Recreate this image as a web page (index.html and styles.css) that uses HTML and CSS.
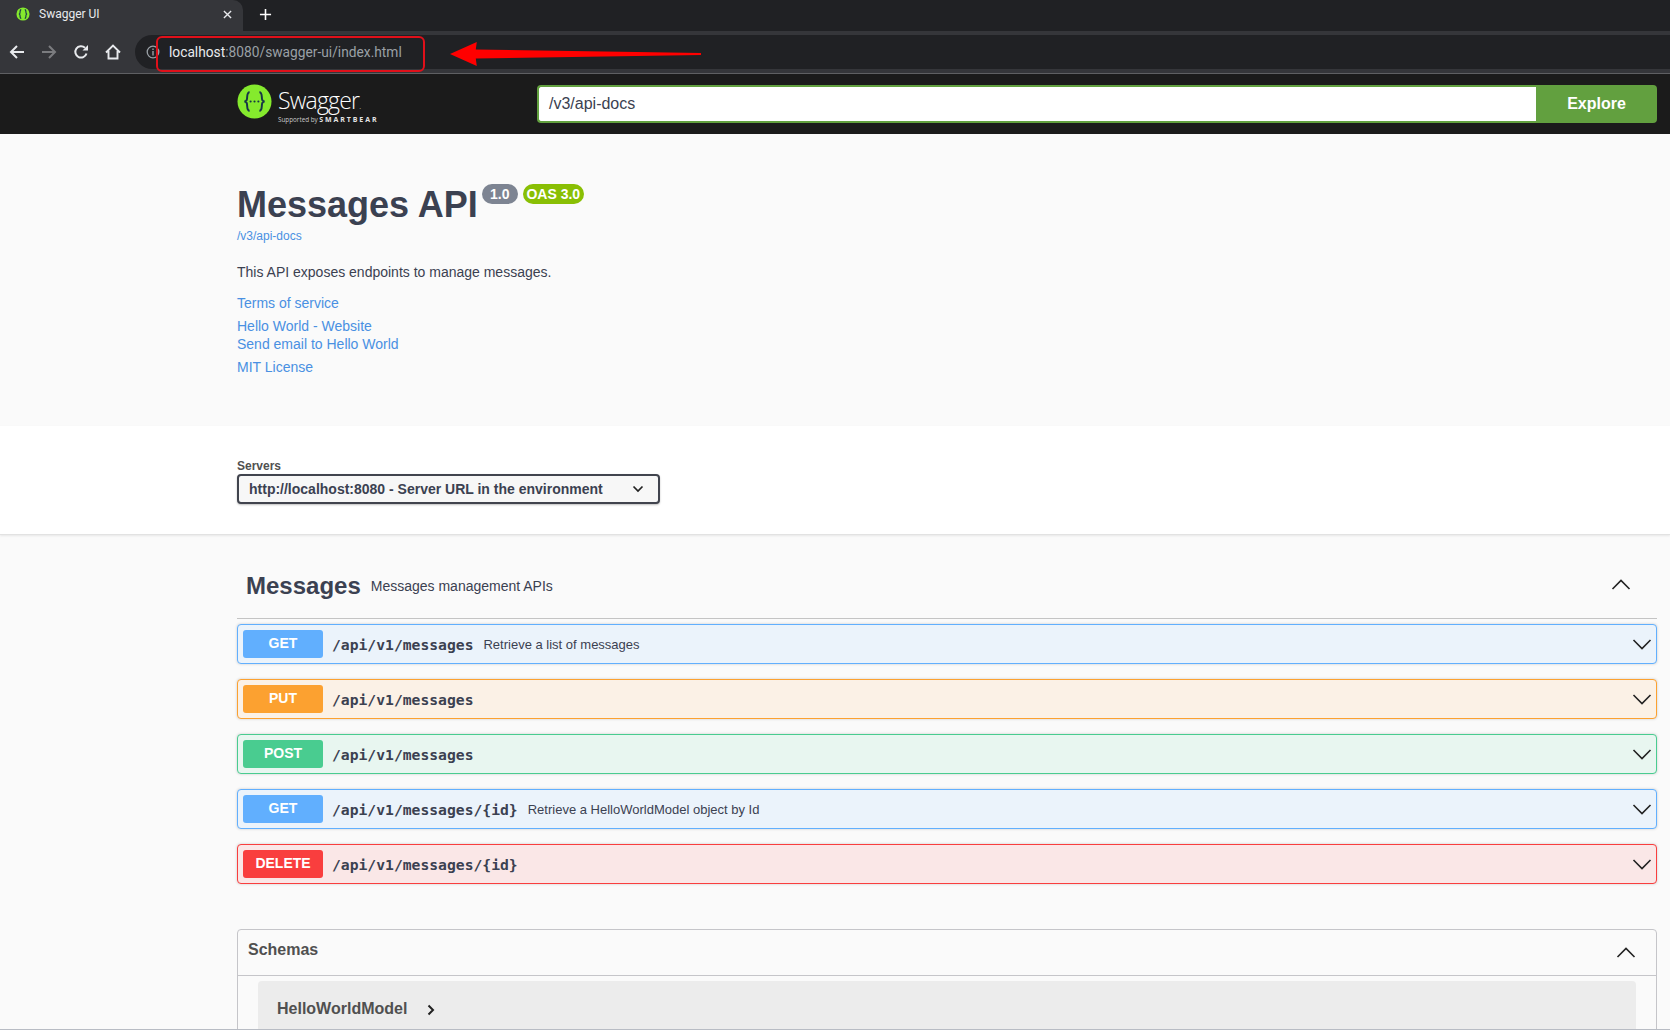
FILE: index.html
```html
<!DOCTYPE html>
<html lang="en">
<head>
    <meta charset="UTF-8">
    <title>Swagger UI</title>
    <link rel="stylesheet" href="styles.css">
</head>
<body>
    <!-- Browser chrome -->
    <div class="tabstrip">
        <div class="tab">
            <svg class="tab-icon" viewBox="0 0 16 16">
                <circle cx="8" cy="8" r="7.500" fill="#85ea2d"/>
                <path d="M6 3C4 3 5 6.500 4.400 7.300 4.200 7.700 3.800 8 3.200 8 3.800 8 4.200 8.300 4.400 8.700 5 9.500 4 13 6 13M10 3C12 3 11 6.500 11.600 7.300 11.800 7.700 12.200 8 12.800 8 12.200 8 11.800 8.300 11.600 8.700 11 9.500 12 13 10 13" fill="none" stroke="#173647" stroke-width="1.300"/>
            </svg>
            <span class="tab-title">Swagger UI</span>
            <svg class="tab-close" viewBox="0 0 10 10"><path d="M1 1L9 9M9 1L1 9" stroke="#e8eaed" stroke-width="1.500"/></svg>
        </div>
        <svg class="new-tab" viewBox="0 0 14 14"><path d="M7 1V13M1 7H13" stroke="#fff" stroke-width="1.700"/></svg>
    </div>
    <div class="toolbar">
        <svg class="nav-icon" viewBox="0 0 16 16"><path d="M15 8H2M8 2L2 8L8 14" fill="none" stroke="#e8eaed" stroke-width="2"/></svg>
        <svg class="nav-icon" viewBox="0 0 16 16"><path d="M1 8H14M8 2L14 8L8 14" fill="none" stroke="#7b7c7f" stroke-width="2"/></svg>
        <svg class="nav-icon" viewBox="0 0 16 16"><path d="M13.500 9.500A5.700 5.700 0 1 1 12 3.800" fill="none" stroke="#e8eaed" stroke-width="2"/><path d="M9.500 6.500H15V1Z" fill="#e8eaed"/></svg>
        <svg class="nav-icon" viewBox="0 0 16 16"><path d="M1 8.500L8 1.500L15 8.500M3.500 7V14.500H12.500V7" fill="none" stroke="#e8eaed" stroke-width="1.900"/></svg>
        <div class="omnibox">
            <svg class="info-icon" viewBox="0 0 14 14"><circle cx="7" cy="7" r="5.800" fill="none" stroke="#9aa0a6" stroke-width="1.300"/><path d="M7 6V10.500M7 3.400V5" stroke="#9aa0a6" stroke-width="1.400"/></svg>
            <span class="url"><span class="url-host">localhost</span>:8080/swagger-ui/index.html</span>
        </div>
        <div class="url-mark"></div>
        <svg class="url-arrow" viewBox="0 0 254 30"><path d="M0 15L27 3L26 10.500L253 14L253 16L26 19.500L27 27Z" fill="#f00"/></svg>
    </div>

    <!-- Swagger top bar -->
    <header class="topbar">
        <div class="topbar-inner">
            <div class="logo">
                <svg class="logo-mark" viewBox="0 0 36 36">
                    <circle cx="18" cy="18" r="17.500" fill="#85ea2d"/>
                    <path d="M13 8.500C9.500 8.500 11 14.500 10 16.500 9.500 17.500 8.500 18 7.500 18 8.500 18 9.500 18.500 10 19.500 11 21.500 9.500 27.500 13 27.500M23 8.500C26.500 8.500 25 14.500 26 16.500 26.500 17.500 27.500 18 28.500 18 27.500 18 26.500 18.500 26 19.500 25 21.500 26.500 27.500 23 27.500" fill="none" stroke="#173647" stroke-width="2"/>
                    <circle cx="14" cy="18" r="1.100" fill="#173647"/>
                    <circle cx="18" cy="18" r="1.100" fill="#173647"/>
                    <circle cx="22" cy="18" r="1.100" fill="#173647"/>
                </svg>
                <div class="logo-text">
                    <div class="logo-name">Swagger<span class="logo-dot">.</span></div>
                    <div class="logo-sub">Supported by <span class="logo-bear">SMARTBEAR</span></div>
                </div>
            </div>
            <form class="explore">
                <div class="explore-input">/v3/api-docs</div>
                <div class="explore-btn">Explore</div>
            </form>
        </div>
    </header>

    <!-- API info -->
    <section class="info">
        <div class="wrap">
            <div class="title-row">
                <h1>Messages API</h1>
                <span class="badge badge-version">1.0</span>
                <span class="badge badge-oas">OAS 3.0</span>
            </div>
            <a class="spec-link">/v3/api-docs</a>
            <p class="description">This API exposes endpoints to manage messages.</p>
            <a class="info-link link-terms">Terms of service</a>
            <a class="info-link link-site">Hello World - Website</a>
            <a class="info-link">Send email to Hello World</a>
            <a class="info-link link-license">MIT License</a>
        </div>
    </section>

    <!-- Servers -->
    <section class="servers">
        <div class="wrap">
            <div class="servers-label">Servers</div>
            <div class="server-select">
                <span>http://localhost:8080 - Server URL in the environment</span>
                <svg class="select-arrow" viewBox="0 0 12 8"><path d="M1.500 1.500L6 6L10.500 1.500" fill="none" stroke="#222" stroke-width="1.700"/></svg>
            </div>
        </div>
    </section>

    <!-- Operations -->
    <main class="operations">
        <div class="wrap">
            <div class="tag">
                <h3>Messages</h3>
                <span class="tag-desc">Messages management APIs</span>
                <svg class="arrow arrow-tag" viewBox="0 0 20 20"><path d="M1.500 14L10 5.500L18.500 14" fill="none" stroke="#222" stroke-width="1.600"/></svg>
            </div>

            <div class="opblock opblock-get">
                <span class="method">GET</span>
                <span class="path">/api/v1/messages</span>
                <span class="summary">Retrieve a list of messages</span>
                <svg class="arrow" viewBox="0 0 20 20"><path d="M1.500 6L10 14.500L18.500 6" fill="none" stroke="#222" stroke-width="1.600"/></svg>
            </div>
            <div class="opblock opblock-put">
                <span class="method">PUT</span>
                <span class="path">/api/v1/messages</span>
                <svg class="arrow" viewBox="0 0 20 20"><path d="M1.500 6L10 14.500L18.500 6" fill="none" stroke="#222" stroke-width="1.600"/></svg>
            </div>
            <div class="opblock opblock-post">
                <span class="method">POST</span>
                <span class="path">/api/v1/messages</span>
                <svg class="arrow" viewBox="0 0 20 20"><path d="M1.500 6L10 14.500L18.500 6" fill="none" stroke="#222" stroke-width="1.600"/></svg>
            </div>
            <div class="opblock opblock-get">
                <span class="method">GET</span>
                <span class="path">/api/v1/messages/{id}</span>
                <span class="summary">Retrieve a HelloWorldModel object by Id</span>
                <svg class="arrow" viewBox="0 0 20 20"><path d="M1.500 6L10 14.500L18.500 6" fill="none" stroke="#222" stroke-width="1.600"/></svg>
            </div>
            <div class="opblock opblock-delete">
                <span class="method">DELETE</span>
                <span class="path">/api/v1/messages/{id}</span>
                <svg class="arrow" viewBox="0 0 20 20"><path d="M1.500 6L10 14.500L18.500 6" fill="none" stroke="#222" stroke-width="1.600"/></svg>
            </div>

            <div class="schemas">
                <div class="schemas-head">
                    <h4>Schemas</h4>
                    <svg class="arrow" viewBox="0 0 20 20"><path d="M1.500 14L10 5.500L18.500 14" fill="none" stroke="#222" stroke-width="1.600"/></svg>
                </div>
                <div class="model-box">
                    <span class="model-name">HelloWorldModel</span>
                    <svg class="model-arrow" viewBox="0 0 8 12"><path d="M1.500 1.500L6 6L1.500 10.500" fill="none" stroke="#222" stroke-width="2"/></svg>
                </div>
            </div>
        </div>
    </main>
    <div class="bottom-line"></div>
</body>
</html>
```
FILE: styles.css
```css
html, body {
    margin: 0;
    height: 1030px;
    overflow: hidden;
}

body {
    font-family: "Liberation Sans", Arial, sans-serif;
    background: #fafafa;
    color: #3b4151;
    position: relative;
}

/* Browser chrome */
.tabstrip {
    height: 31px;
    background: #202124;
    display: flex;
    align-items: center;
}

.tab {
    width: 243px;
    height: 31px;
    box-sizing: border-box;
    background: #35363a;
    border-radius: 0 10px 0 0;
    display: flex;
    align-items: center;
    padding: 0 11px 3px 16px;
}

.tab-icon {
    width: 14px;
    height: 14px;
    margin-right: 9px;
}

.tab-title {
    flex: 1;
    font-family: "Roboto", sans-serif;
    font-size: 12px;
    color: #e8eaed;
}

.tab-close {
    width: 9px;
    height: 9px;
}

.new-tab {
    width: 13px;
    height: 13px;
    margin-left: 16px;
    margin-bottom: 3px;
}

.toolbar {
    height: 42px;
    background: #35363a;
    border-bottom: 1px solid #5f6063;
    display: flex;
    align-items: center;
    padding-left: 9px;
    position: relative;
}

.nav-icon {
    width: 16px;
    height: 16px;
    margin-right: 16px;
}

.omnibox {
    flex: 1;
    height: 34px;
    margin-left: -2px;
    background: #202124;
    border-radius: 17px 0 0 17px;
    display: flex;
    align-items: center;
    padding-left: 11px;
}

.info-icon {
    width: 14px;
    height: 14px;
    margin-right: 9px;
}

.url {
    font-family: "Roboto", sans-serif;
    font-size: 13.750px;
    color: #9aa0a6;
}

.url-host {
    color: #e8eaed;
}

.url-mark {
    position: absolute;
    left: 156px;
    top: 5px;
    width: 265px;
    height: 32px;
    border: 2px solid #e0101a;
    border-radius: 6px;
}

.url-arrow {
    position: absolute;
    left: 450px;
    top: 8px;
    width: 252px;
    height: 30px;
}

/* Top bar */
.topbar {
    height: 60px;
    background: #1b1b1b;
}

.topbar-inner {
    margin-left: 237px;
    width: 1420px;
    height: 60px;
    display: flex;
    align-items: center;
}

.logo {
    width: 300px;
    display: flex;
    align-items: center;
    padding-bottom: 2px;
}

.logo-mark {
    width: 35px;
    height: 35px;
    margin-right: 6px;
    margin-bottom: 4px;
}

.logo-name {
    font-family: "Open Sans", sans-serif;
    font-weight: 300;
    font-size: 23px;
    line-height: 21px;
    margin-top: 8px;
    letter-spacing: -0.800px;
    color: #fff;
}

.logo-dot {
    font-size: 8px;
}

.logo-sub {
    font-family: "Open Sans", sans-serif;
    font-size: 6.300px;
    line-height: 8px;
    color: #c9c9c9;
}

.logo-bear {
    font-weight: 700;
    font-size: 7px;
    letter-spacing: 1.900px;
    color: #e4e4e4;
}

.explore {
    flex: 1;
    height: 38px;
    display: flex;
}

.explore-input {
    flex: 1;
    box-sizing: border-box;
    background: #fff;
    border: 2px solid #62a03f;
    border-right: none;
    border-radius: 4px 0 0 4px;
    padding-left: 10px;
    font-size: 16px;
    line-height: 34px;
    color: #3b4151;
}

.explore-btn {
    width: 121px;
    background: #62a03f;
    border-radius: 0 4px 4px 0;
    color: #fff;
    font-size: 16px;
    font-weight: bold;
    line-height: 37px;
    text-align: center;
}

/* Shared column */
.wrap {
    margin-left: 237px;
    width: 1420px;
}

a {
    color: #4990e2;
    display: block;
}

/* API info */
.info {
    height: 292px;
    box-sizing: border-box;
    padding-top: 50px;
    background: #fafafa;
}

.title-row {
    display: flex;
    align-items: flex-start;
    height: 44px;
}

h1 {
    margin: 0;
    font-size: 36px;
    line-height: 42px;
    font-weight: bold;
    color: #3b4151;
}

.badge {
    height: 20px;
    line-height: 20px;
    border-radius: 10px;
    color: #fff;
    font-size: 14px;
    font-weight: bold;
    text-align: center;
}

.badge-version {
    width: 36px;
    margin-left: 4px;
    background: #7d8492;
}

.badge-oas {
    width: 61px;
    margin-left: 5px;
    background: #89bf04;
}

.spec-link {
    font-size: 12px;
    line-height: 16px;
}

.description {
    margin: 18px 0 0;
    font-size: 14px;
    line-height: 20px;
}

.info-link {
    font-size: 14px;
    line-height: 18px;
}

.link-terms {
    margin-top: 12px;
}

.link-site {
    margin-top: 5px;
}

.link-license {
    margin-top: 5px;
}

/* Servers */
.servers {
    height: 109px;
    box-sizing: border-box;
    padding-top: 33px;
    background: #fff;
    border-bottom: 1px solid #e2e2e2;
    box-shadow: 0 1px 2px rgba(0, 0, 0, 0.08);
}

.servers-label {
    font-size: 12px;
    font-weight: bold;
    line-height: 14px;
    color: #505050;
}

.server-select {
    width: 423px;
    height: 30px;
    margin-top: 1px;
    box-sizing: border-box;
    border: 2px solid #41444e;
    border-radius: 4px;
    background: #f7f7f7;
    box-shadow: 0 1px 2px rgba(0, 0, 0, 0.25);
    display: flex;
    align-items: center;
    justify-content: space-between;
    padding: 0 14px 0 10px;
    font-size: 14px;
    font-weight: bold;
}

.select-arrow {
    width: 12px;
    height: 8px;
}

/* Operations */
.operations {
    height: 495px;
    box-sizing: border-box;
    overflow: hidden;
    padding-top: 19px;
}

.tag {
    height: 64px;
    border-bottom: 1px solid #c4c4c4;
    display: flex;
    align-items: center;
    padding-left: 9px;
}

h3 {
    margin: 0 10px 0 0;
    font-size: 24px;
    font-weight: bold;
}

.tag-desc {
    flex: 1;
    font-size: 14px;
}

.arrow {
    width: 20px;
    height: 20px;
}

.arrow-tag {
    margin-right: 26px;
    margin-bottom: 2px;
}

.opblock {
    height: 40px;
    box-sizing: border-box;
    margin-top: 15px;
    border: 1px solid;
    border-radius: 4px;
    display: flex;
    align-items: center;
    padding: 0 4px 0 5px;
    box-shadow: 0 0 3px rgba(0, 0, 0, 0.19);
}

.tag + .opblock {
    margin-top: 5px;
}

.opblock .arrow {
    margin-left: auto;
}

.method {
    width: 80px;
    height: 28px;
    flex-shrink: 0;
    border-radius: 3px;
    color: #fff;
    font-size: 14px;
    font-weight: bold;
    line-height: 27px;
    text-align: center;
    margin-right: 9px;
}

.path {
    font-family: "DejaVu Sans Mono", monospace;
    font-size: 14.700px;
    font-weight: bold;
    color: #3b4151;
    padding-top: 1px;
}

.summary {
    margin-left: 10px;
    font-size: 13px;
    color: #3b4151;
}

.opblock-get {
    background: #ebf3fb;
    border-color: #61affe;
}

.opblock-get .method {
    background: #61affe;
}

.opblock-put {
    background: #fbf1e6;
    border-color: #fca130;
}

.opblock-put .method {
    background: #fca130;
}

.opblock-post {
    background: #e8f6f0;
    border-color: #49cc90;
}

.opblock-post .method {
    background: #49cc90;
}

.opblock-delete {
    background: #fae7e7;
    border-color: #f93e3e;
}

.opblock-delete .method {
    background: #f93e3e;
}

/* Schemas */
.schemas {
    margin-top: 45px;
    border: 1px solid #c5c5c9;
    border-radius: 4px;
    height: 200px;
}

.schemas-head {
    height: 46px;
    box-sizing: border-box;
    border-bottom: 1px solid #c5c5c9;
    display: flex;
    align-items: center;
    justify-content: space-between;
    padding: 0 20px 5px 10px;
}

.schemas-head .arrow {
    margin-top: 5px;
}

h4 {
    margin: 0;
    font-size: 16px;
    font-weight: bold;
    color: #505050;
}

.model-box {
    margin: 5px 20px 0;
    height: 80px;
    background: #ececec;
    border-radius: 4px;
    padding: 19px 0 0 19px;
    display: flex;
    align-items: flex-start;
    box-sizing: border-box;
}

.model-name {
    font-size: 16px;
    font-weight: bold;
    color: #505050;
}

.model-arrow {
    width: 8px;
    height: 12px;
    margin: 4px 0 0 20px;
}

.bottom-line {
    position: absolute;
    left: 0;
    right: 0;
    bottom: 0;
    height: 1px;
    background: #b8bcc4;
}
```
